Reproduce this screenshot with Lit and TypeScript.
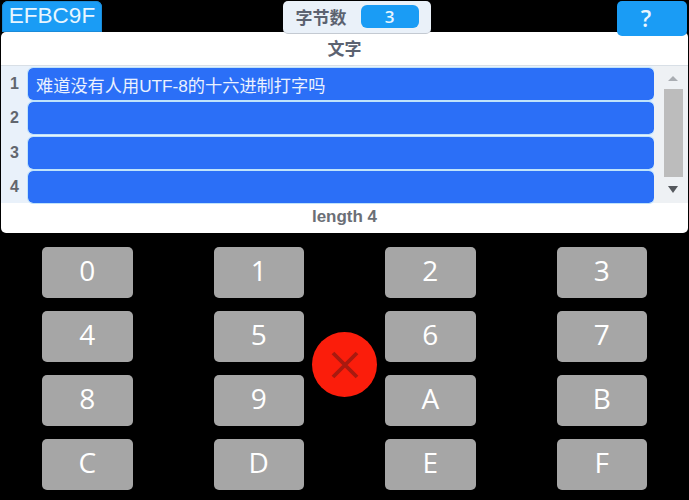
import { LitElement, html, css } from "lit";
import { customElement } from "lit/decorators.js";

const KEYS = "0123456789ABCDEF".split("");

@customElement("app-root")
export class AppRoot extends LitElement {
  static styles = css`
    :host { display: block; width: 689px; height: 500px; background: #000; overflow: hidden; font-family: "Liberation Sans", "Noto Sans CJK SC", sans-serif; }
    .top { display: flex; justify-content: space-between; align-items: flex-start; height: 32px; padding: 1px 2px 0 2px; box-sizing: border-box; position: relative; z-index: 2; }
    .code { width: 100px; height: 31px; box-sizing: border-box; background: #1a9cf5; color: #e8f6ff; font-size: 22.5px; line-height: 30px; text-align: center; border-radius: 6px 6px 0 0; box-shadow: inset 0 0 0 1px #1b8bd8; }
    .pill { width: 148px; height: 33px; margin-right: 6px; box-sizing: border-box; background: #eaf1f9; border-radius: 5px; display: flex; align-items: center; padding: 0 12px 1px 13px; gap: 14px; color: #5c6270; font-size: 17px; font-weight: 700; border-bottom: 1px solid #c4cad2; }
    .count { flex: 1; height: 23px; background: #1a9cf5; border-radius: 6px; color: #e8f6ff; font-family: "Open Sans", sans-serif; font-size: 17px; line-height: 23px; text-align: center; font-weight: 600; }
    .help { width: 70px; height: 35px; box-sizing: border-box; padding-right: 12px; background: #1a9cf5; color: #e8f6ff; font-family: "Open Sans", sans-serif; font-size: 23px; font-weight: 600; line-height: 35px; text-align: center; border-radius: 5px; }
    .panel { margin: 0 1px; height: 201px; background: #fff; border-radius: 5px; display: flex; flex-direction: column; overflow: hidden; }
    .title { height: 33px; line-height: 35px; text-align: center; font-size: 17px; font-weight: 700; color: #5c6270; border-bottom: 1px solid #d8dfe6; flex: none; }
    .list { height: 137px; flex: none; display: flex; background: #e9f1fa; }
    .nums { width: 27px; flex: none; padding-top: 2px; display: flex; flex-direction: column; gap: 2.3px; }
    .num { height: 32px; line-height: 32px; text-align: center; font-size: 16px; font-weight: 700; color: #62666e; }
    .rows { width: 626px; flex: none; padding-top: 2px; display: flex; flex-direction: column; gap: 2.3px; }
    .row { height: 32px; box-sizing: border-box; background: #2b6ff7; color: #eaf1fe; border-radius: 5px; font-size: 17.2px; line-height: 36px; padding-left: 8px; outline: 1px solid #bfe3fb; }
    .bar { flex: 1; display: flex; flex-direction: column; align-items: center; padding: 0 1px 0 5px; background: #eef1f4; }
    .up, .down { width: 0; height: 0; border-left: 5.5px solid transparent; border-right: 5.5px solid transparent; flex: none; }
    .up { border-bottom: 5px solid #a9adb2; margin: 10px 0 8px; }
    .down { border-top: 7px solid #55585d; margin-top: 9px; }
    .thumb { width: 19px; height: 88px; background: #bcbcbc; flex: none; }
    .foot { flex: 1; text-align: center; line-height: 28px; font-size: 17px; font-weight: 700; color: #6b6f76; }
    .pad { position: relative; display: grid; grid-template-columns: repeat(4, 90.5px); grid-auto-rows: 50.5px; column-gap: 81px; row-gap: 13.5px; padding: 14px 42px 0; }
    .key { background: #a6a6a6; border-radius: 5px; color: #fff; font-family: "Open Sans", sans-serif; font-size: 28px; font-weight: 500; line-height: 47px; text-align: center; }
    .del { position: absolute; left: 312px; top: 99px; width: 65px; height: 65px; border-radius: 50%; background: #fb1d0b; display: flex; align-items: center; justify-content: center; }
  `;

  render() {
    const rows = ["难道没有人用UTF-8的十六进制打字吗", "", "", ""];
    return html`
      <div class="top">
        <div class="code">EFBC9F</div>
        <div class="pill"><span>字节数</span><div class="count">3</div></div>
        <div class="help">?</div>
      </div>
      <div class="panel">
        <div class="title">文字</div>
        <div class="list">
          <div class="nums">${rows.map((_, i) => html`<div class="num">${i + 1}</div>`)}</div>
          <div class="rows">${rows.map((r) => html`<div class="row">${r}</div>`)}</div>
          <div class="bar"><div class="up"></div><div class="thumb"></div><div class="down"></div></div>
        </div>
        <div class="foot">length 4</div>
      </div>
      <div class="pad">
        ${KEYS.map((k) => html`<div class="key">${k}</div>`)}
        <div class="del">
          <svg width="30" height="30" viewBox="0 0 30 30"><path d="M3 3 L27 27 M27 3 L3 27" stroke="#a81a10" stroke-width="3.8" fill="none"/></svg>
        </div>
      </div>
    `;
  }
}
